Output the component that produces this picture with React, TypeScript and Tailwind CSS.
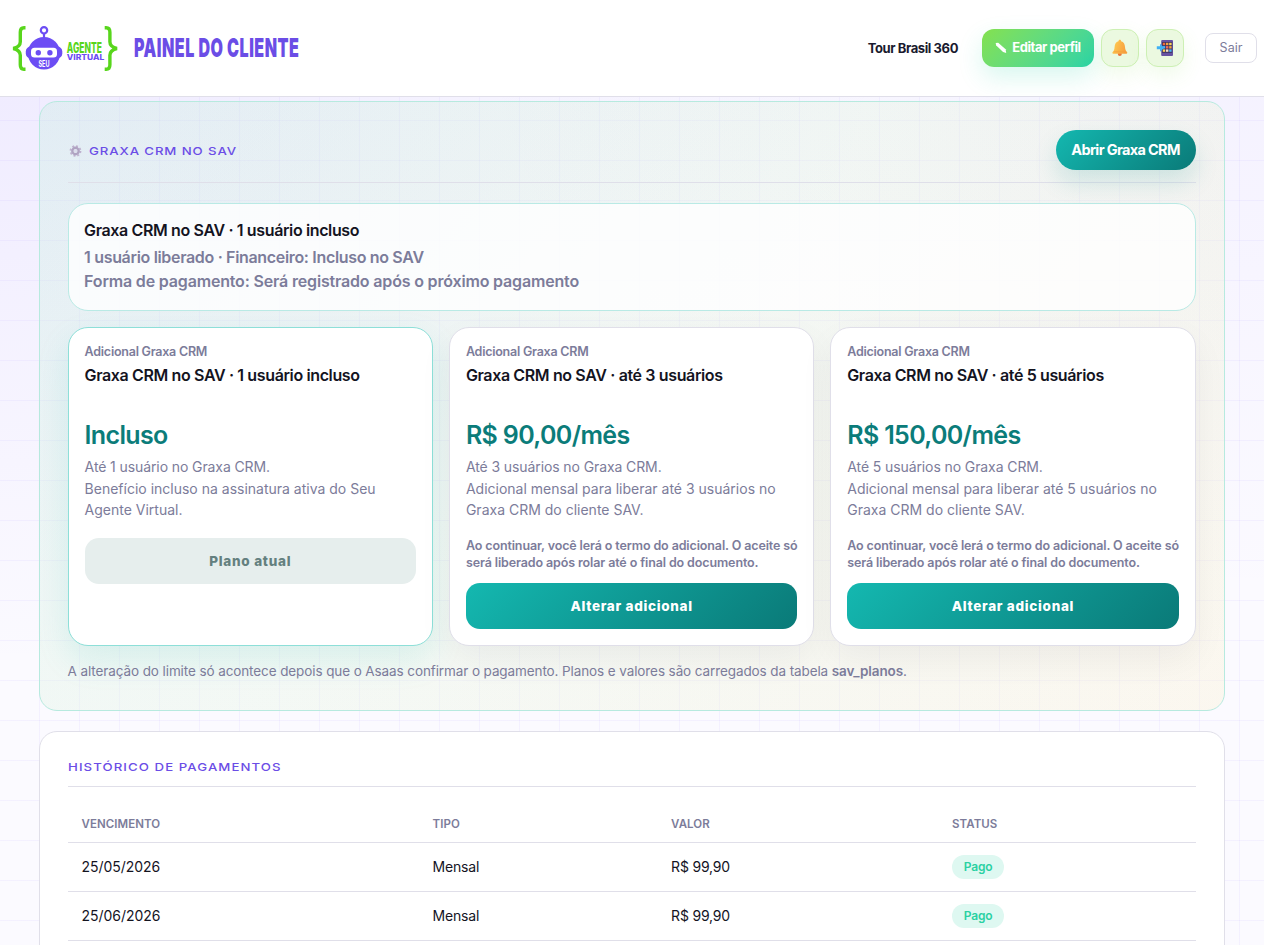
import type { ReactNode } from 'react';

type Plan = {
  name: string;
  price: string;
  limit: string;
  lines: string[];
  current?: boolean;
};

const plans: Plan[] = [
  {
    name: 'Graxa CRM no SAV · 1 usuário incluso',
    price: 'Incluso',
    limit: 'Até 1 usuário no Graxa CRM.',
    lines: ['Benefício incluso na assinatura ativa do Seu', 'Agente Virtual.'],
    current: true,
  },
  {
    name: 'Graxa CRM no SAV · até 3 usuários',
    price: 'R$ 90,00/mês',
    limit: 'Até 3 usuários no Graxa CRM.',
    lines: ['Adicional mensal para liberar até 3 usuários no', 'Graxa CRM do cliente SAV.'],
  },
  {
    name: 'Graxa CRM no SAV · até 5 usuários',
    price: 'R$ 150,00/mês',
    limit: 'Até 5 usuários no Graxa CRM.',
    lines: ['Adicional mensal para liberar até 5 usuários no', 'Graxa CRM do cliente SAV.'],
  },
];

const payments = [
  { due: '25/05/2026', type: 'Mensal', value: 'R$ 99,90', status: 'Pago' },
  { due: '25/06/2026', type: 'Mensal', value: 'R$ 99,90', status: 'Pago' },
];

function Logo() {
  return (
    <svg width="108" height="48" viewBox="0 0 108 48" className="block shrink-0 overflow-visible">
      <g fill="none" stroke="#58d61c" strokeWidth="3.4">
        <path d="M14.500 3.700h-1.500q-3.700 0-3.700 4.500v9.500q0 5-7 6.800q7 1.800 7 6.800v9.500q0 4.500 3.700 4.500h1.500" />
        <path d="M93.700 3.700h1.500q3.700 0 3.700 4.500v9.500q0 5 7 6.800q-7 1.800-7 6.800v9.500q0 4.500-3.700 4.500h-1.500" />
      </g>
      <path d="M33 10v6" stroke="#6c4df4" strokeWidth="2.200" />
      <circle cx="33" cy="6.300" r="3.200" fill="#fff" stroke="#6c4df4" strokeWidth="2.200" />
      <rect x="14.800" y="22.500" width="36.500" height="12" rx="5" fill="#6c4df4" />
      <circle cx="33" cy="29.300" r="16.200" fill="#6c4df4" />
      <rect x="20" y="23.800" width="26" height="9.600" rx="3.500" fill="#fff" />
      <circle cx="27.300" cy="28.700" r="2.700" fill="#6c4df4" />
      <circle cx="38.900" cy="28.700" r="2.700" fill="#6c4df4" />
      <text x="27.500" y="42.500" fontFamily="Inter, sans-serif" fontWeight="700" fontSize="8.500" fill="#fff" textLength="11" lengthAdjust="spacingAndGlyphs">SEU</text>
      <text x="55.800" y="28.800" fontFamily="Inter, sans-serif" fontWeight="800" fontSize="14" fill="#58d61c" textLength="35" lengthAdjust="spacingAndGlyphs">AGENTE</text>
      <text x="55.800" y="35.700" fontFamily="Inter, sans-serif" fontWeight="800" fontSize="7.500" fill="#6c4df4" textLength="37.500" lengthAdjust="spacingAndGlyphs">VIRTUAL</text>
    </svg>
  );
}

function PencilIcon() {
  return (
    <svg width="12" height="12" viewBox="0 0 12 12" className="shrink-0">
      <path d="M.7.9 3.200.8 10.600 7.300 11.200 10.900 8.100 10 1.200 3.600Z" fill="#fff" />
    </svg>
  );
}

function BellIcon() {
  return (
    <svg width="16" height="18" viewBox="0 0 16 18">
      <defs>
        <linearGradient id="bell" x1="0" y1="0" x2="1" y2="0.3">
          <stop offset="0" stopColor="#ffd052" />
          <stop offset="1" stopColor="#f7a040" />
        </linearGradient>
      </defs>
      <circle cx="7.800" cy="15" r="2" fill="#e8743a" />
      <path d="M7.800.8c.9 0 1.300.6 1.300 1.500 2.700.8 3.700 2.800 3.900 5.600.2 2.700.8 3.900 2 5.100.5.600.300 1.700-.5 1.700H1.200c-.9 0-1.100-1.100-.500-1.700 1.200-1.200 1.700-2.400 1.900-5.100.2-2.800 1.200-4.800 3.900-5.600 0-.9.400-1.500 1.300-1.500Z" fill="url(#bell)" />
      <path d="M1.500 12.800h12.800" stroke="#f3a13c" strokeWidth=".7" />
    </svg>
  );
}

function PhoneIcon() {
  const apps = ['#f36c3a', '#f4a340', '#ffd257', '#4fb5f5', '#f36c5a', '#f4a340', '#ffd257', '#f4e2c8', '#4fb5f5'];
  return (
    <svg width="18" height="18" viewBox="0 0 18 18">
      <rect x="5.200" y="1" width="11.800" height="16" rx="1" fill="#6652a0" />
      <rect x="6" y="3" width="10.200" height="10.800" fill="#3c3560" />
      {apps.map((color, i) => (
        <rect key={i} x={6.800 + (i % 3) * 3.200} y={3.800 + Math.floor(i / 3) * 3.300} width="2.400" height="2.400" fill={color} />
      ))}
      <path d="M.8 7.200h3.200V4.800l4.300 4-4.300 4v-2.500H.8Z" fill="#3fb1f4" />
    </svg>
  );
}

function GearIcon() {
  return (
    <svg width="14" height="14" viewBox="0 0 14 14" className="shrink-0">
      <circle cx="7.500" cy="7" r="5" fill="none" stroke="#bfb2cf" strokeWidth="1.800" strokeDasharray="1.960 1.960" />
      <circle cx="7.500" cy="7" r="3.200" fill="none" stroke="#b0a3c2" strokeWidth="2.400" />
      <circle cx="7.500" cy="7" r="1.700" fill="#dcdcec" />
    </svg>
  );
}

function IconButton({ children }: { children: ReactNode }) {
  return (
    <button className="flex size-[38px] items-center justify-center rounded-xl border border-[#cdf0b4] bg-[#ebf9e0] shadow-[0_8px_20px_rgba(132,225,76,0.12)]">
      {children}
    </button>
  );
}

function Header() {
  return (
    <header className="relative flex h-[97px] items-center justify-between border-b border-[#e0dfe9] bg-white pr-[7px] pl-[11px]">
      <div className="flex items-center">
        <Logo />
        <h1 className="ml-[15px] origin-left scale-x-[0.617] text-[26px] leading-none font-black tracking-[0.800px] whitespace-nowrap text-[#6b4de6]">
          PAINEL DO CLIENTE
        </h1>
      </div>
      <div className="flex items-center">
        <span className="mr-6 pt-0.5 text-[13px] font-bold tracking-[-0.4px] text-[#1a1a2e]">Tour Brasil 360</span>
        <button className="mr-[7px] flex h-[38px] w-28 items-center justify-center gap-[5px] rounded-xl bg-linear-135 from-[#84e14c] to-[#25d3a6] text-[13px] font-bold tracking-[-0.45px] text-white shadow-[0_10px_24px_rgba(37,211,166,0.18)]">
          <PencilIcon />
          Editar perfil
        </button>
        <div className="mr-[21px] flex gap-[7px]">
          <IconButton><BellIcon /></IconButton>
          <IconButton><PhoneIcon /></IconButton>
        </div>
        <button className="h-[30px] w-[52px] rounded-lg border border-[#e0dfe9] bg-white pt-px text-[12.500px] text-[#7c7c9a]">
          Sair
        </button>
      </div>
    </header>
  );
}

function PlanCard({ plan }: { plan: Plan }) {
  return (
    <article
      className={
        plan.current
          ? 'flex h-[319px] flex-col rounded-[20px] border border-[#8ddfd8] bg-white p-4 shadow-[0_14px_34px_rgba(20,184,176,0.12)]'
          : 'flex h-[319px] flex-col rounded-[20px] border border-[#e0dfe9] bg-white p-4 shadow-[0_14px_34px_rgba(26,26,46,0.05)]'
      }
    >
      <p className="text-[12.500px] leading-4 font-semibold tracking-[-0.24px] text-[#7c7c9a]">Adicional Graxa CRM</p>
      <h3 className="mt-[5px] h-[51px] text-base leading-5 font-semibold tracking-[-0.37px] whitespace-nowrap text-[#14141f]">
        {plan.name}
      </h3>
      <p className="mt-[3px] text-[25px] leading-8 font-semibold tracking-[-0.65px] text-[#0b7c7a]">{plan.price}</p>
      <div className="mt-[5px] text-sm leading-[21.500px] whitespace-nowrap text-[#7c7c9a]">
        <p className="tracking-[-0.1px]">{plan.limit}</p>
        {plan.lines.map((line) => (
          <p key={line}>{line}</p>
        ))}
      </div>
      {plan.current ? (
        <button className="mt-[17px] h-[46px] w-full rounded-[14px] bg-[#e6eeed] pt-0.5 text-[13.500px] font-extrabold tracking-[0.75px] text-[#64807f]">
          Plano atual
        </button>
      ) : (
        <>
          <p className="mt-4 text-[12.500px] leading-[17px] font-semibold tracking-[-0.12px] whitespace-nowrap text-[#7c7c9a]">
            Ao continuar, você lerá o termo do adicional. O aceite só
            <br />
            será liberado após rolar até o final do documento.
          </p>
          <button className="mt-auto h-[46px] w-full rounded-[14px] bg-linear-135 from-[#14b8b0] to-[#0a7a78] text-[13.500px] font-extrabold tracking-[0.7px] text-white">
            Alterar adicional
          </button>
        </>
      )}
    </article>
  );
}

function CrmSection() {
  return (
    <section className="h-[610px] rounded-[18px] border border-[#b7eadf] bg-[linear-gradient(135deg,rgba(20,184,176,0.075),rgba(82,200,110,0.045)_45%,rgba(255,190,50,0.06)),linear-gradient(rgba(248,252,236,0.28),rgba(250,252,240,0.28))] p-7">
      <div className="flex h-[53px] items-start justify-between border-b border-[#dfdfe9]">
        <div className="flex h-10 items-center gap-[7.500px] pt-0.5">
          <GearIcon />
          <h2 className="origin-left scale-x-[1.200] text-[11px] leading-none font-medium tracking-[0.750px] whitespace-nowrap text-[#6b4de6]">
            GRAXA CRM NO SAV
          </h2>
        </div>
        <button className="h-10 w-[140px] rounded-full bg-linear-135 from-[#14b8b0] to-[#0a7a78] text-[14.500px] font-bold tracking-[-0.65px] text-white shadow-[0_12px_24px_rgba(15,140,135,0.16)]">
          Abrir Graxa CRM
        </button>
      </div>

      <div className="mt-5 h-[108px] rounded-[20px] border border-[#b9eae5] bg-white/80 px-[15.500px] pt-3.5 text-base leading-6 font-semibold text-[#7c7c9a]">
        <p className="mb-[3px] tracking-[-0.37px] text-[#14141f]">Graxa CRM no SAV · 1 usuário incluso</p>
        <p className="tracking-[-0.33px]">1 usuário liberado · Financeiro: Incluso no SAV</p>
        <p className="tracking-[-0.17px]">Forma de pagamento: Será registrado após o próximo pagamento</p>
      </div>

      <div className="mt-4 grid grid-cols-3 gap-4">
        {plans.map((plan) => (
          <PlanCard key={plan.name} plan={plan} />
        ))}
      </div>

      <p className="mt-3.5 text-[13.500px] leading-[22px] tracking-[-0.1px] whitespace-nowrap text-[#7c7c9a]">
        A alteração do limite só acontece depois que o Asaas confirmar o pagamento. Planos e valores são carregados da
        tabela <strong className="font-semibold">sav_planos</strong>.
      </p>
    </section>
  );
}

function PaymentHistory() {
  return (
    <section className="mt-5 h-[260px] rounded-t-[18px] border border-[#e0dfe9] bg-white px-7 pt-7">
      <div className="h-[27px] border-b border-[#e0dfe9] pt-0.5">
        <h2 className="origin-left scale-x-[1.200] text-[11px] leading-none font-medium tracking-[0.900px] whitespace-nowrap text-[#6b4de6]">
          HISTÓRICO DE PAGAMENTOS
        </h2>
      </div>
      <table className="mt-[19px] w-full table-fixed border-collapse text-left">
        <colgroup>
          <col className="w-[351px]" />
          <col className="w-[238.500px]" />
          <col className="w-[281px]" />
          <col />
        </colgroup>
        <thead>
          <tr className="h-9 border-b border-[#e0dfe9] text-[11.500px] tracking-[0.05px] text-[#7c7c9a]">
            {['VENCIMENTO', 'TIPO', 'VALOR', 'STATUS'].map((label) => (
              <th key={label} className="px-3.5 pt-0.5 pb-0 font-semibold">{label}</th>
            ))}
          </tr>
        </thead>
        <tbody>
          {payments.map((p) => (
            <tr key={p.due} className="h-[49px] border-b border-[#e0dfe9] text-sm tracking-[-0.2px] text-[#14141f]">
              <td className="px-3.5 py-0 tracking-[-0.05px]">{p.due}</td>
              <td className="px-3.5 py-0">{p.type}</td>
              <td className="px-3.5 py-0">{p.value}</td>
              <td className="px-3.5 py-0">
                <span className="flex h-6 w-[52px] items-center justify-center rounded-full bg-[#def8f1] text-xs font-semibold text-[#2bd1a3]">
                  {p.status}
                </span>
              </td>
            </tr>
          ))}
        </tbody>
      </table>
    </section>
  );
}

export default function App() {
  return (
    <div className="h-[945px] w-full overflow-hidden bg-[#fbfaff] bg-[radial-gradient(ellipse_at_0%_0%,rgba(108,71,255,0.09),transparent_50%),radial-gradient(ellipse_at_100%_0%,rgba(108,71,255,0.05),transparent_45%)] font-['Inter',sans-serif]">
      <div className="h-full bg-[linear-gradient(rgba(108,71,255,0.05)_1px,transparent_1px),linear-gradient(90deg,rgba(108,71,255,0.05)_1px,transparent_1px)] bg-size-[40px_40px] bg-position-[-1px_0px]">
        <Header />
        <main className="mt-1 ml-[38.600px] w-[1186px]">
          <CrmSection />
          <PaymentHistory />
        </main>
      </div>
    </div>
  );
}
